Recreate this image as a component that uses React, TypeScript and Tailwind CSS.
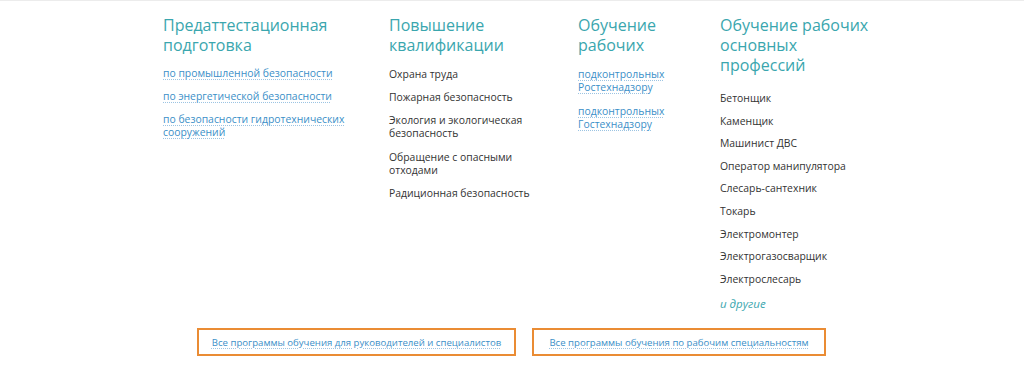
import React from 'react'

const head = 'text-[16px] leading-[20px] text-[#3aa6ae] font-normal'
const link = 'text-[#3b8fc8] underline decoration-dotted decoration-[#9cc4e2] underline-offset-2'
const plain = 'text-[#333]'

const workers = [
  'Бетонщик',
  'Каменщик',
  'Машинист ДВС',
  'Оператор манипулятора',
  'Слесарь-сантехник',
  'Токарь',
  'Электромонтер',
  'Электрогазосварщик',
  'Электрослесарь',
]

export default function App() {
  return (
    <div
      className="w-[1024px] h-[372px] bg-white border-t border-[#ececec] text-[10.4px] leading-[13px]"
      style={{ fontFamily: '"Open Sans", "Liberation Sans", sans-serif' }}
    >
      <div className="flex pl-[163px] pt-[14px]">
        <div className="w-[226px]">
          <h3 className={head}>Предаттестационная<br />подготовка</h3>
          <ul className="mt-[12px] space-y-[10px]">
            <li><a className={link}>по промышленной безопасности</a></li>
            <li><a className={link}>по энергетической безопасности</a></li>
            <li><a className={link}>по безопасности гидротехнических<br />сооружений</a></li>
          </ul>
        </div>

        <div className="w-[189px]">
          <h3 className={head}>Повышение<br />квалификации</h3>
          <ul className={`mt-[13px] space-y-[10px] ${plain}`}>
            <li>Охрана труда</li>
            <li>Пожарная безопасность</li>
            <li>Экология и экологическая<br />безопасность</li>
            <li className="pt-[1px]">Обращение с опасными<br />отходами</li>
            <li>Радиционная безопасность</li>
          </ul>
        </div>

        <div className="w-[142px]">
          <h3 className={head}>Обучение<br />рабочих</h3>
          <ul className="mt-[13px] space-y-[11px]">
            <li><a className={link}>подконтрольных<br />Ростехнадзору</a></li>
            <li><a className={link}>подконтрольных<br />Гостехнадзору</a></li>
          </ul>
        </div>

        <div className="w-[190px]">
          <h3 className={head}>Обучение рабочих<br />основных<br />профессий</h3>
          <ul className={`mt-[17px] space-y-[9.6px] ${plain}`}>
            {workers.map((w) => (
              <li key={w}>{w}</li>
            ))}
            <li className="italic text-[#3aa6ae] text-[11.5px] pt-[2px]">и другие</li>
          </ul>
        </div>
      </div>

      <div className="flex pl-[197px] gap-[16px] mt-[18px]">
        <a className="w-[319px] h-[28px] border-2 border-[#ea8c34] flex items-center justify-center text-[9.6px]">
          <span className={link}>Все программы обучения для руководителей и специалистов</span>
        </a>
        <a className="w-[294px] h-[28px] border-2 border-[#ea8c34] flex items-center justify-center text-[9.6px]">
          <span className={link}>Все программы обучения по рабочим специальностям</span>
        </a>
      </div>
    </div>
  )
}
